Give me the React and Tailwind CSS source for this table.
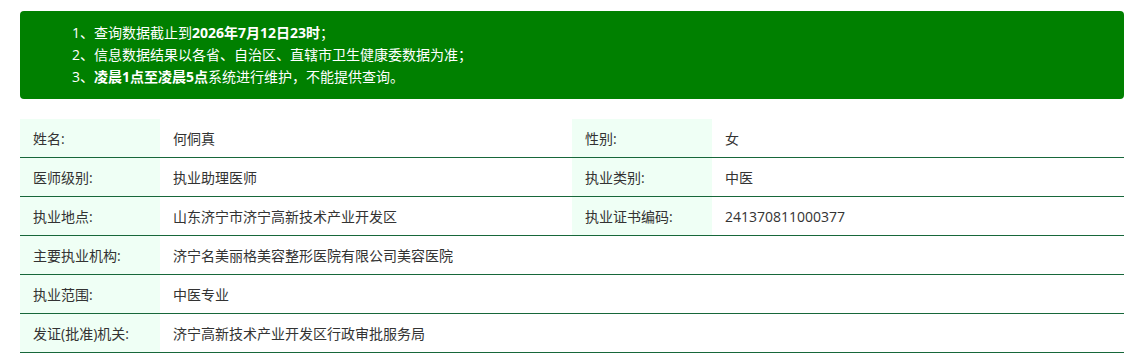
const font = { fontFamily: '"Open Sans", "Noto Sans CJK SC", sans-serif' }

const rows = [
  { l1: '姓名:', v1: '何侗真', l2: '性别:', v2: '女' },
  { l1: '医师级别:', v1: '执业助理医师', l2: '执业类别:', v2: '中医' },
  { l1: '执业地点:', v1: '山东济宁市济宁高新技术产业开发区', l2: '执业证书编码:', v2: '241370811000377' },
  { l1: '主要执业机构:', v1: '济宁名美丽格美容整形医院有限公司美容医院' },
  { l1: '执业范围:', v1: '中医专业' },
  { l1: '发证(批准)机关:', v1: '济宁高新技术产业开发区行政审批服务局' },
]

export default function App() {
  return (
    <div className="w-[1136px] h-[360px] bg-white pl-5 pr-3 pt-[11px] text-[14px]" style={font}>
      <div className="bg-[#008000] rounded text-white pl-[52px] py-[11px] leading-[22px]">
        <div>1、查询数据截止到<b>2026年7月12日23时</b>；</div>
        <div>2、信息数据结果以各省、自治区、直辖市卫生健康委数据为准；</div>
        <div>3、<b>凌晨1点至凌晨5点</b>系统进行维护，不能提供查询。</div>
      </div>

      <div className="mt-5 text-[#333]">
        {rows.map((r, i) => (
          <div key={i} className="flex h-[39px] border-b border-[#17673a]">
            <div className="w-[140px] bg-[#efffF5] px-[13px] flex items-center">{r.l1}</div>
            <div className="w-[412px] px-[13px] flex items-center">{r.v1}</div>
            {r.l2 && (
              <>
                <div className="w-[140px] bg-[#efffF5] px-[13px] flex items-center">{r.l2}</div>
                <div className="flex-1 px-[13px] flex items-center">{r.v2}</div>
              </>
            )}
          </div>
        ))}
      </div>
    </div>
  )
}
